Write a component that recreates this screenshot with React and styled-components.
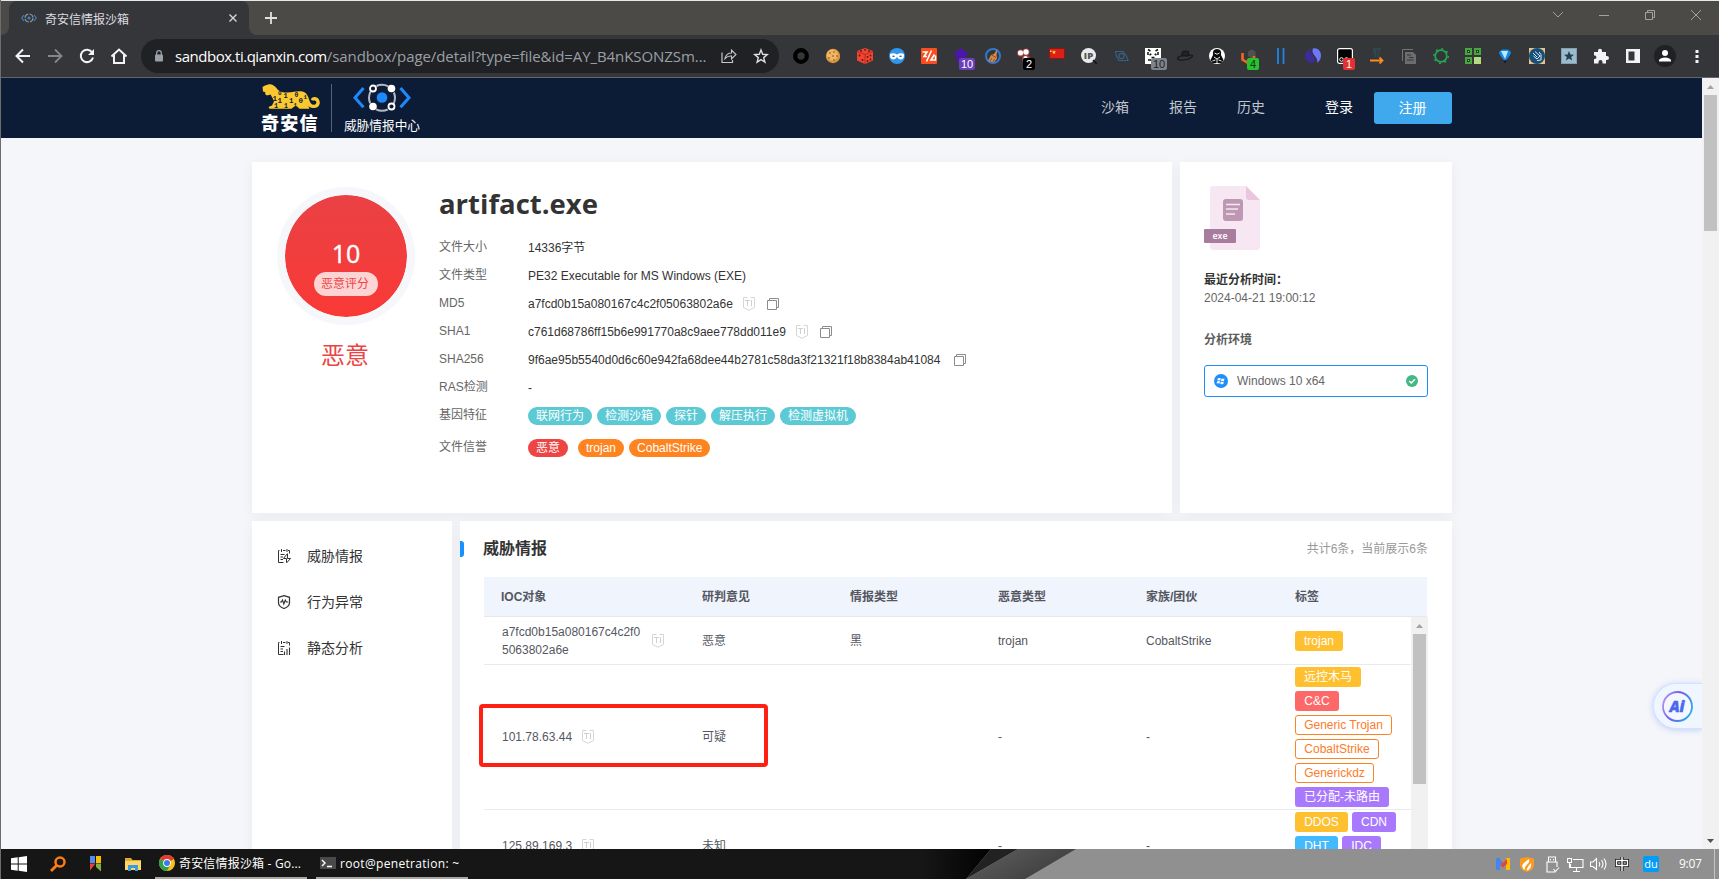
import React from "react";
import styled, { createGlobalStyle, css } from "styled-components";

const ui = `"Open Sans", "Noto Sans CJK SC", sans-serif`;
const body = `"Liberation Sans", "Noto Sans CJK SC", sans-serif`;

const Global = createGlobalStyle`
  * { box-sizing: border-box; }
  body { margin: 0; background: #f5f6fa; overflow: hidden; }
  svg { display: block; flex: none; }
`;

const Desktop = styled.div`
  width: 1719px;
  height: 879px;
  display: flex;
  flex-direction: column;
  overflow: hidden;
  border-left: 1px solid #6d6d6d;
  font-family: ${body};
  font-size: 12px;
`;

/* ---------- browser chrome ---------- */

const TabStrip = styled.div`
  height: 35px;
  flex: none;
  display: flex;
  background: #4b4a46;
  border-top: 1px solid #e4eaea;
`;
const TabEdge = styled.div`
  width: 8px;
  background: #35363a;
  &::after {
    content: "";
    display: block;
    height: 34px;
    background: #4b4a46;
    border-radius: ${(p) => (p.$right ? "0 0 0 8px" : "0 0 8px 0")};
  }
`;
const Tab = styled.div`
  width: 240px;
  display: flex;
  align-items: center;
  padding: 0 11px 0 12px;
  background: #35363a;
  border-radius: 8px 8px 0 0;
  color: #dcdde0;
  font: 12px/35px "Noto Sans CJK SC", sans-serif;
`;
const TabTitle = styled.span`
  flex: 1;
  margin-left: 8px;
`;
const NewTab = styled.div`
  display: flex;
  align-items: center;
  padding-left: 7px;
`;
const WindowButtons = styled.div`
  margin-left: auto;
  width: 184px;
  height: 28px;
  display: grid;
  grid-template-columns: repeat(4, 46px);
  place-items: center;
`;
const Toolbar = styled.div`
  height: 43px;
  flex: none;
  display: flex;
  align-items: center;
  background: #35363a;
  border-bottom: 1px solid #65666a;
`;
const NavButtons = styled.div`
  display: flex;
  width: 134px;
  padding-left: 6px;
`;
const Slot = styled.div`
  position: relative;
  width: 32px;
  height: 32px;
  display: grid;
  place-items: center;
`;
const AddressBar = styled.div`
  width: 638px;
  height: 34px;
  margin-left: 6px;
  border-radius: 17px;
  background: #202124;
  display: flex;
  align-items: center;
  padding: 0 2px 0 13px;
`;
const Url = styled.div`
  flex: 1;
  margin-left: 11px;
  color: #9aa0a6;
  font: 15px/30px ${ui};
  letter-spacing: -0.07px;
  white-space: nowrap;
  b { font-weight: 400; color: #fff; letter-spacing: -0.48px; }
`;
const Extensions = styled.div`
  display: flex;
  margin-left: 6px;
`;
const Badge = styled.span`
  position: absolute;
  left: 14px;
  top: 18px;
  min-width: 12px;
  height: 12px;
  padding: 0 2px;
  border-radius: 2px;
  background: ${(p) => p.$bg};
  color: ${(p) => p.$fg || "#fff"};
  font: 11px/12px "Liberation Sans", sans-serif;
  text-align: center;
`;

/* ---------- page ---------- */

const Viewport = styled.div`
  flex: 1;
  min-height: 0;
  display: flex;
`;
const Page = styled.div`
  position: relative;
  flex: 1;
  overflow: hidden;
  background: #f5f6fa;
`;
const Header = styled.header`
  height: 60px;
  background: #0c1c37;
`;
const Wrap = styled.div`
  width: 1200px;
  margin: 0 249px 0 251px;
`;
const HeaderInner = styled(Wrap)`
  height: 60px;
  display: flex;
  align-items: center;
`;
const Brand = styled.div`
  width: 80px;
  height: 48px;
  padding-left: 10px;
  border-right: 1px solid #55617a;
  display: flex;
  flex-direction: column;
  color: #fff;
`;
const BrandName = styled.div`
  font: 900 18px/22px "Noto Sans CJK SC", sans-serif;
  letter-spacing: 1.2px;
  margin: 2px 0 0 -1px;
`;
const Product = styled.div`
  width: 80px;
  height: 50px;
  margin-left: 10px;
  display: flex;
  flex-direction: column;
  align-items: center;
  gap: 3px;
  color: #fff;
  font: 12.7px/18px "Noto Sans CJK SC", sans-serif;
  white-space: nowrap;
`;
const Menu = styled.nav`
  margin-left: auto;
  display: flex;
  align-items: center;
  font-size: 14px;
  color: #c0c5cd;
`;
const MenuItem = styled.span`
  width: 28px;
  height: 32px;
  line-height: 30px;
  white-space: nowrap;
  margin-right: ${(p) => p.$gap}px;
  color: ${(p) => (p.$bright ? "#fff" : "inherit")};
`;
const Register = styled.button`
  width: 78px;
  height: 32px;
  padding: 0 1px 0 0;
  border: 0;
  border-radius: 3px;
  background: #40a9ee;
  color: #fff;
  font: 14px/30px ${body};
`;

const Panel = styled.section`
  background: #fff;
  box-shadow: 0 3px 12px rgba(60, 60, 40, 0.06);
`;
const Summary = styled(Wrap)`
  margin-top: 24px;
  height: 351px;
  display: grid;
  grid-template-columns: 920px 272px;
  gap: 8px;
`;
const FileCard = styled(Panel)`
  display: flex;
  padding: 25px;
`;
const ScoreColumn = styled.div`
  width: 138px;
  display: flex;
  flex-direction: column;
  align-items: center;
`;
const ScoreDisc = styled.div`
  width: 138px;
  height: 138px;
  border: 8px solid #f5f7fb;
  border-radius: 50%;
  background: linear-gradient(#ea4145, #f93936) padding-box;
  display: flex;
  flex-direction: column;
  align-items: center;
  padding-top: 40px;
`;
const Score = styled.div`
  height: 37px;
  color: #fff;
  font: 25px/36px ${ui};
  -webkit-text-stroke: 0.4px #fff;
`;
const ScoreLabel = styled.div`
  width: 64px;
  height: 24px;
  border-radius: 12px;
  background: #fdd4d4;
  color: #ee4444;
  font: 12px/24px ${body};
  text-align: center;
  padding-right: 2px;
`;
const Verdict = styled.div`
  margin-top: 12px;
  padding-right: 2px;
  color: #ee4444;
  font: 24px/34px "Noto Sans CJK SC", sans-serif;
`;
const Details = styled.div`
  margin-left: 24px;
`;
const FileName = styled.h1`
  height: 46px;
  margin: -6px 0 7px;
  color: #333;
  font: 700 27.5px/46px ${ui};
`;
const Field = styled.div`
  height: ${(p) => p.$h || 28}px;
  display: flex;
  align-items: center;
`;
const FieldLabel = styled.span`
  width: 89px;
  padding-bottom: 2px;
  color: #666;
  line-height: 18px;
`;
const FieldValue = styled.span`
  display: flex;
  align-items: center;
  color: #333;
  line-height: 18px;
  white-space: nowrap;
`;
const IconGap = styled.span`
  margin-left: ${(p) => p.$w}px;
`;
const Pill = styled.span`
  height: 18px;
  padding: 0 8px;
  margin-right: ${(p) => p.$gap || 5}px;
  border-radius: 9px;
  background: ${(p) => p.$bg};
  color: #fff;
  line-height: 18px;
`;

const EnvCard = styled(Panel)`
  padding: 24px;
  display: flex;
  flex-direction: column;
`;
const Caption = styled.div`
  margin-top: ${(p) => p.$mt}px;
  font-weight: 700;
  line-height: 18px;
  color: ${(p) => p.$color};
`;
const When = styled.div`
  line-height: 18px;
  color: #666;
`;
const EnvOption = styled.div`
  margin-top: 16px;
  height: 32px;
  display: flex;
  align-items: center;
  padding: 0 9px;
  border: 1px solid #1e8efb;
  border-radius: 3px;
  color: #666;
  line-height: 18px;
`;
const EnvName = styled.span`
  flex: 1;
  margin-left: 9px;
`;

const Lower = styled(Wrap)`
  margin-top: 8px;
  height: 400px;
  display: grid;
  grid-template-columns: 200px 992px;
  gap: 8px;
`;
const SideNav = styled(Panel)`
  padding: 12px 25px;
`;
const SideItem = styled.div`
  height: 46px;
  display: flex;
  align-items: center;
  gap: 16px;
  color: #333;
  font-size: 14px;
  line-height: 20px;
`;
const Intel = styled(Panel)`
  padding: 17px 24px 0 0;
`;
const IntelHead = styled.div`
  height: 39px;
  display: flex;
  align-items: flex-start;
  justify-content: space-between;
`;
const IntelTitle = styled.h2`
  margin: 0;
  display: flex;
  align-items: center;
  gap: 19px;
  color: #333;
  font: 700 16px/22px ${body};
  &::before {
    content: "";
    width: 4px;
    height: 16px;
    border-radius: 0 3px 3px 0;
    background: #1890ff;
  }
`;
const Count = styled.span`
  margin: 1px 0 0 0;
  color: #999;
  line-height: 20px;
`;
const Table = styled.div`
  margin-left: 24px;
`;
const gridCols = css`
  display: grid;
  grid-template-columns: 202px 148px 148px 148px 149px 1fr;
  align-items: center;
`;
const HeadRow = styled.div`
  ${gridCols}
  width: 943px;
  height: 40px;
  background: #f0f4fc;
  border-bottom: 1px solid #e6e8ec;
  color: #4a4d55;
  font-weight: 700;
`;
const BodyArea = styled.div`
  display: flex;
  height: 300px;
`;
const Rows = styled.div`
  width: 927px;
`;
const Row = styled.div`
  ${gridCols}
  height: ${(p) => p.$h}px;
  border-bottom: 1px solid #e8eaec;
`;
const Cell = styled.div`
  padding-left: ${(p) => (p.$first ? 17 : 16)}px;
  color: #545761;
  line-height: 18px;
`;
const Ioc = styled(Cell)`
  display: flex;
  align-items: center;
  padding-left: 18px;
  gap: ${(p) => p.$gap}px;
`;
const Tags = styled.div`
  padding: 0 8px 0 16px;
  display: flex;
  flex-wrap: wrap;
  gap: 4px;
`;
const tones = {
  yellow: "#fec02f",
  red: "#fd6869",
  purple: "#a979fd",
  blue: "#42bafd",
};
const Tag = styled.span`
  width: ${(p) => p.$w}px;
  height: 20px;
  border-radius: 3px;
  text-align: center;
  white-space: nowrap;
  line-height: 21px;
  color: #fff;
  background: ${(p) => tones[p.$tone]};
  ${(p) =>
    p.$tone === "outline" &&
    css`
      line-height: 19px;
      color: #fd7c28;
      background: #fff;
      border: 1px solid #fd8420;
    `}
`;

const Track = styled.div`
  width: 17px;
  flex: none;
  display: flex;
  flex-direction: column;
  align-items: center;
  background: #f1f1f1;
`;
const Thumb = styled.div`
  width: 13px;
  height: ${(p) => p.$h}px;
  background: #c1c1c1;
`;
const TrackArrow = styled.div`
  height: 17px;
  display: grid;
  place-items: center;
  ${(p) => p.$end && "margin-top: auto;"}
`;

const Highlight = styled.div`
  position: absolute;
  left: 478px;
  top: 626px;
  width: 289px;
  height: 63px;
  border: 4px solid #fe2012;
  border-radius: 4px;
`;
const Assistant = styled.div`
  position: absolute;
  right: 0;
  top: 605px;
  width: 49px;
  height: 46px;
  padding: 7px 0 0 8px;
  border: 1px solid #d3e3fd;
  border-right: 0;
  border-radius: 23px 0 0 23px;
  background: #f0f6ff;
  box-shadow: 0 1px 6px rgba(80, 110, 250, 0.3);
`;

/* ---------- taskbar ---------- */

const Taskbar = styled.footer`
  position: relative;
  height: 30px;
  flex: none;
  display: flex;
  align-items: center;
  background: #909090;
  color: #fff;
`;
const Backdrop = styled.svg`
  position: absolute;
  left: 0;
  top: 0;
`;
const Shortcuts = styled.div`
  position: relative;
  display: flex;
  align-items: center;
  width: 154px;
  padding-left: 10px;
  gap: 23px;
`;
const Task = styled.div`
  position: relative;
  width: 152px;
  height: 30px;
  margin-right: 9px;
  padding-left: 4px;
  display: flex;
  align-items: center;
  gap: 4px;
  border-bottom: 2px solid #a9a8a4;
  font: 12px/28px ${ui};
  letter-spacing: ${(p) => p.$ls}px;
  white-space: nowrap;
`;
const TaskText = styled.span`
  padding-top: 2px;
`;
const Tray = styled.div`
  position: relative;
  margin-left: auto;
  width: 223px;
  height: 30px;
  display: flex;
  align-items: center;
`;
const TrayItem = styled.div`
  width: ${(p) => p.$w}px;
  display: flex;
`;
const ImeBadge = styled.div`
  width: 16px;
  height: 16px;
  border-radius: 2px;
  background: #009cf5;
  font: 11px/15px ${ui};
  text-align: center;
`;
const Clock = styled.div`
  font: 12px/28px ${ui};
  letter-spacing: -0.3px;
  width: 35px;
`;
const DesktopEdge = styled.div`
  width: 1px;
  height: 30px;
  background: #c4c4c4;
`;

/* ---------- drawings ---------- */

const S = ({ w = 16, h = w, vb, children }) => (
  <svg width={w} height={h} viewBox={vb || `0 0 ${w} ${h}`} fill="none">
    {children}
  </svg>
);

const Favicon = () => (
  <S>
    <path d="M3 5 .7 8 3 11M13 5l2.300 3L13 11" stroke="#3b82c4" strokeWidth="1.200" />
    <circle cx="8" cy="8" r="4" stroke="#8d9298" strokeWidth="1.200" strokeDasharray="5 1.280" />
    <circle cx="8" cy="8" r="1.600" fill="#3b82c4" />
  </S>
);

const Tiger = () => (
  <S w={58} h={25}>
    <path
      d="M.5 3 3 1.500 7 .2c3-.3 5 1 7 3.200 1.500 2 3 3.600 6 4.600 4 1 8 .6 12-.2 4-.8 8-.8 10.500.4 2.500 1.500 3.500 4 4.500 7 1.300 4.500 3.500 6.300 6 5.300 2-1 1.800-3.400-.3-4-1.500-.3-2.700.7-3.500-.7-.4-1.700 1.500-2.900 3.500-2.700 3.500.3 5.500 3.300 5 6.400-.5 3.300-3.500 5-7 4.500-2-.4-3.500-1-4.500-2l1.300 2.800H37.500L35 22.500l-3 .3L29.500 24.800H7.500L6.500 23l3.500-1.500 2-4-1.500-3.500-2-3.500L5 11.500l-2-1.500.5-1.800L1 7.500z"
      fill="#fbc92f"
    />
    <g fill="#0c1c37" fontFamily="Liberation Mono" fontWeight="700" fontSize="7.500">
      <text x="10.500" y="16.500">1</text>
      <text x="16" y="11" fontSize="6">0</text>
      <text x="15.500" y="18.500">1</text>
      <text x="21.500" y="14" fontSize="7">1</text>
      <text x="12" y="23.500" fontSize="7">1</text>
      <text x="22" y="23.500" fontSize="6.500">1</text>
      <text x="27" y="19">1</text>
      <text x="32.500" y="13" fontSize="6.500">0</text>
      <text x="31.500" y="22.500" fontSize="6">1</text>
      <text x="36.500" y="18.500">0</text>
      <text x="41.500" y="14.500" fontSize="6">1</text>
    </g>
  </S>
);

const Orbit = () => (
  <S w={58} h={30}>
    <path d="M10.500 5 2 14.800l8.500 9.500M47.500 5 56 14.800l-8.500 9.500" stroke="#1d89fb" strokeWidth="3" />
    <circle cx="29" cy="14.800" r="13" stroke="#b3b9c6" strokeWidth="2" strokeDasharray="12 8.420" strokeDashoffset="6" />
    <circle cx="29" cy="14.500" r="5.300" fill="#1d89fb" />
    <circle cx="38.500" cy="5.500" r="3.800" fill="#fff" />
    <circle cx="20" cy="23.500" r="3.800" fill="#fff" />
    <circle cx="20" cy="5.500" r="3" stroke="#fff" strokeWidth="1.800" fill="#0c1c37" />
    <circle cx="38.500" cy="23.500" r="3" stroke="#fff" strokeWidth="1.800" fill="#0c1c37" />
  </S>
);

const Shield = () => (
  <S w={12} h={14}>
    <path d="M4.500.5h-4v10L6 13.300l5.500-2.800V.5h-4" stroke="#d6d6d6" />
    <path d="M2 3.500h5M4.500 3.500v5.500M8.500 3v6" stroke="#d0d0d0" />
  </S>
);
const Copy = () => (
  <S w={12}>
    <path d="M.5 2.500h9v9h-9zM2.500 2.500v-2h9v9h-2" stroke="#8c8c8c" />
  </S>
);

const FileArt = () => (
  <S w={56} h={64}>
    <path d="M9 0h33l14 14v47a3 3 0 0 1-3 3H9a3 3 0 0 1-3-3V3a3 3 0 0 1 3-3z" fill="#f6e7f2" />
    <path d="M42 0l14 14H45a3 3 0 0 1-3-3z" fill="#e9c5df" />
    <rect x="19" y="13" width="20" height="22" rx="3" fill="#be97b3" />
    <path d="M22 18.500h14M22 23h12M22 28h9" stroke="#f6e7f2" strokeWidth="1.400" />
    <rect y="43" width="32" height="14" rx="1" fill="#a77c9c" />
    <text x="16" y="53" fill="#fff" fontSize="8.800" fontWeight="600" fontFamily="Open Sans" textAnchor="middle">exe</text>
  </S>
);
const WinDot = () => (
  <S w={14}>
    <circle cx="7" cy="7" r="7" fill="#1e8efb" />
    <path d="M3.800 4.300q1.500-.8 3 0l-.5 2.300q-1.500-.7-3 0zM7.500 4.500q1.500.6 3-.1L10 6.700q-1.500.7-3 .1zM3.100 7.400q1.500-.7 3 0l-.5 2.200q-1.500-.7-3 0zM6.800 7.600q1.500.7 3 0L9.300 9.900q-1.500.7-3 0z" fill="#fff" />
  </S>
);
const Check = () => (
  <S w={12}>
    <circle cx="6" cy="6" r="6" fill="#42b983" />
    <path d="M3.200 6 5.300 8l3.600-3.700" stroke="#fff" strokeWidth="1.500" />
  </S>
);

const ListIcon = ({ kind }) => (
  <S w={14}>
    {kind === "behavior" ? (
      <>
        <path d="M7 .7 12.500 2.300v5.200c0 3-2.500 4.900-5.500 6-3-1.100-5.500-3-5.500-6V2.300z" stroke="#333" strokeWidth="1.200" />
        <path d="M3 7h1.500l1-2 1.300 4L8.300 5l1 2h1.900" stroke="#333" strokeWidth="1.100" />
      </>
    ) : (
      <>
        <path d="M2.500 1.500h-1v12h5M6 1.500h2.500M11 1.500h1.500v3M4.500 0v3M10 0v3M3.500 5.500h4M3.500 8h2.500M3.500 10.500h2.500" stroke="#333" />
        {kind === "intel" ? (
          <path d="M10.500 4.500 6.500 9.500h3V13.500M10.500 5v4.500h3L9.500 14" stroke="#333" />
        ) : (
          <path d="M7.500 10.500v3.500M10 8v6M12.500 6.500V14" stroke="#333" strokeWidth="1.100" />
        )}
      </>
    )}
  </S>
);

const AiMark = () => (
  <S w={31}>
    <defs>
      <linearGradient id="ring" x1="0" y1=".2" x2="1" y2=".6">
        <stop offset="0" stopColor="#b694f0" />
        <stop offset=".45" stopColor="#6c5df0" />
        <stop offset="1" stopColor="#2fa8e8" />
      </linearGradient>
    </defs>
    <circle cx="15.500" cy="15.500" r="14.500" stroke="url(#ring)" strokeWidth="1.800" fill="#f4f7ff" />
    <text x="15" y="21" textAnchor="middle" fontFamily="Open Sans" fontWeight="800" fontStyle="italic" fontSize="15" fill="#4a68ee" stroke="#4a68ee" strokeWidth=".4">Ai</text>
  </S>
);

const Arrow = ({ down, dark }) => (
  <S w={7} h={4}>
    <path d={down ? "M0 0h7L3.500 4z" : "M0 4h7L3.500 0z"} fill={dark ? "#505050" : "#a3a3a3"} />
  </S>
);

const extensions = [
  { art: <circle cx="8" cy="8" r="5.800" stroke="#000" strokeWidth="4.300" /> },
  {
    art: (
      <>
        <circle cx="8" cy="8" r="7.200" fill="#dd963b" />
        <circle cx="7.300" cy="7" r="5.500" fill="#eeb765" />
        <g fill="#7a4a18"><circle cx="5" cy="5" r=".8" /><circle cx="9" cy="4" r=".8" /><circle cx="8" cy="8" r=".8" /><circle cx="12" cy="8" r=".8" /><circle cx="4" cy="10" r=".8" /><circle cx="9" cy="12" r=".8" /></g>
      </>
    ),
  },
  {
    art: (
      <>
        <path d="m8 0 8 3v9.500L8 16l-8-3.500V3z" fill="#f4432f" />
        <path d="m0 3.500 8 3 8-3M8 6.500V16" stroke="#a82a20" strokeWidth=".8" />
        <g fill="#43201d"><circle cx="4" cy="3" r=".9" /><circle cx="8" cy="1.800" r=".9" /><circle cx="12" cy="3" r=".9" /><circle cx="2.500" cy="7.500" r=".9" /><circle cx="5.500" cy="12" r=".9" /><circle cx="10.500" cy="9" r=".9" /><circle cx="13.500" cy="7.500" r=".9" /><circle cx="10.500" cy="13" r=".9" /><circle cx="13.500" cy="11.500" r=".9" /></g>
      </>
    ),
  },
  {
    art: (
      <>
        <circle cx="8" cy="8" r="8" fill="#2f96ee" />
        <path d="M1 6q3.500-1.500 7 .5Q11.500 4.500 15 6q.5 5-3 5.500-2.500 0-4-2.500-1.500 2.500-4 2.500Q.5 11 1 6z" fill="#fff" />
        <path d="M3 8.300q1.500-1.600 3 0-1.500 1.500-3 0zm7 0q1.500-1.600 3 0-1.500 1.500-3 0z" fill="#1c5fa8" />
      </>
    ),
  },
  {
    art: (
      <>
        <rect width="16" height="16" rx="1" fill="#fb4d1d" />
        <path d="M1.500 4H6L3 8.500h3M10.500 2.500l-5 11M13.500 6.500 10 12H14.500V7.500" stroke="#fff" strokeWidth="1.600" />
      </>
    ),
  },
  { art: <path d="m8 0 8 6-3.500 1.500V13L8 16l-4.500-3V8L0 6z" fill="#4b17a8" />, badge: "10", bg: "#6a3fb8" },
  {
    art: (
      <>
        <circle cx="8" cy="8" r="7" stroke="#2f78d0" strokeWidth="2" />
        <path d="m12.500 1-3.500 5-3 1-3 6 6 1.500 3-4-.5-3.500z" fill="#d58b4c" />
        <path d="m6.500 7 4.500 2.500M5 13l2-3M8 14l1.500-3" stroke="#8a4c20" />
      </>
    ),
  },
  {
    art: (
      <>
        <g fill="#b34040"><circle cx="3.500" cy="5" r="3.500" /><circle cx="9" cy="4" r="3.500" /><circle cx="9" cy="11" r="4" /></g>
        <g fill="#fff"><circle cx="3.500" cy="4.800" r="2.600" /><circle cx="9" cy="4" r="2.700" /><circle cx="8.500" cy="10" r="2" /></g>
      </>
    ),
    badge: "2",
    bg: "#000",
  },
  {
    art: (
      <>
        <path d="M.5.5h15v10H.5z" fill="#dc2018" stroke="#8f1612" />
        <path d="m5 2 .6 1.400 1.500.1-1.200 1 .4 1.500L5 5.200l-1.300.8.4-1.500-1.200-1 1.500-.1zM1 2.500h1.500v1.500H1z" fill="#ffde3a" />
      </>
    ),
  },
  {
    art: (
      <>
        <circle cx="7.500" cy="7.500" r="7.500" fill="#e8eaec" />
        <path d="m12 12 4 4" stroke="#111" strokeWidth="1.500" />
        <text x="7.500" y="11" textAnchor="middle" fontFamily="Open Sans" fontWeight="800" fontSize="9.500" fill="#555">IP</text>
      </>
    ),
  },
  {
    art: (
      <>
        <path d="M2.500 3.500H10L13.500 8l1.500 4.500H6L3.500 8z" stroke="#34638a" strokeWidth="1.100" />
        <circle cx="8.500" cy="8" r="2.600" stroke="#34638a" strokeWidth="1.100" />
      </>
    ),
  },
  {
    art: (
      <>
        <path d="M0 0h16v16H0z" fill="#fff" />
        <path d="M3 1.500 5.500 3M13 1.500 10.500 3M4.500 7l1.800-1M11.500 7l-1.800-1M6.500 9.500h3M3 4v3M13 4v3M3 12h3" stroke="#111" strokeWidth="1.500" />
      </>
    ),
    badge: "10",
    bg: "#7e848c",
    fg: "#222",
  },
  {
    art: (
      <>
        <path d="M4.500 8 5.500 3.500q3-1 6 0L12 8z" fill="#222" stroke="#151515" />
        <path d="M4 8C-2 10 0 12.500 6 12c6-.4 10-3 9.500-4.500Q15 6.500 12 7.500" stroke="#161616" strokeWidth="1.200" />
      </>
    ),
  },
  {
    art: (
      <>
        <circle cx="8" cy="8" r="8" fill="#fff" />
        <path d="M4 7Q3 1 8 1t4 6l2.500 5-2 3h-9l-2-3z" fill="#0a0a0a" />
        <path d="M5.500 5q2.500 2.500 5 0M5 9l3 2 3-2M3.500 13l3-1M12.500 13l-3-1M8 11v4" stroke="#fff" strokeWidth=".9" />
      </>
    ),
  },
  {
    art: (
      <>
        <path d="M7 3.500 11 1.500l3.500 2v5.500L11 11 7 8z" fill="#505050" />
        <path d="M1.500 5v6.500L7 15v-3M13 10v-2" stroke="#f4661f" strokeWidth="2.600" />
      </>
    ),
    badge: "4",
    bg: "#28c22f",
    fg: "#143815",
  },
  { art: <path d="M5 0v16M10.500 0v16" stroke="#1f86e8" strokeWidth="1.800" /> },
  {
    art: (
      <>
        <path d="M6 1C0 2-2 9 2 13c2 2 5 2 7 1 2-2 .5-5-1.500-7S5 3 6 1z" fill="#3b2c9c" />
        <path d="M8 .5c5-1 8 3 8 7 0 3-1.500 6-4 7.500 1-3-.5-5-2.500-7.500S7 3 8 .5z" fill="#6c78f8" />
      </>
    ),
  },
  {
    art: (
      <>
        <rect x=".6" y=".6" width="14.800" height="14.800" rx="2" fill="#000" stroke="#fff" strokeWidth="1.200" />
        <circle cx="4.500" cy="11.500" r="1.800" stroke="#fff" /><circle cx="9.500" cy="11.500" r="1.800" stroke="#fff" />
      </>
    ),
    badge: "1",
    bg: "#e53030",
  },
  {
    art: (
      <>
        <path d="M4 1h8M6.500 1v8M9.500 1v8M5 1v4" stroke="#31474e" strokeWidth="1.800" />
        <path d="M1 12.500h12M10.500 9.500l3 3-3 3" stroke="#fb8a1e" strokeWidth="1.800" />
      </>
    ),
  },
  {
    art: (
      <>
        <path d="M1.500 13V1.500H12" stroke="#747474" />
        <path d="M4 4h8l3 3v9H4z" fill="#6d6d6d" />
        <path d="M6 7h4M8 9.500h4.500M6 12h6.500" stroke="#35363a" strokeWidth="1.200" />
      </>
    ),
  },
  {
    art: (
      <>
        <circle cx="8" cy="8" r="5.800" stroke="#24a552" strokeWidth="1.700" />
        <circle cx="8" cy="8" r="7.200" stroke="#24a552" strokeWidth="1.500" strokeDasharray="2 3.655" />
      </>
    ),
  },
  {
    art: (
      <>
        <path d="M1 1h5v5H1zM10 1h5v5h-5zM1 10h5v5H1z" stroke="#44a83c" strokeWidth="2" />
        <path d="M9 9h7v7H9z" fill="#b3dc82" />
        <path d="M3 3h1v1H3zM12 3h1v1h-1zM3 12h1v1H3z" fill="#8bcf56" />
      </>
    ),
  },
  {
    art: (
      <>
        <path d="M2 4 5 1.500h6L14 4q0 3-6 9.500Q2 7 2 4z" fill="#1388e8" />
        <path d="M4 3h7L10 6 8 11 5.500 6z" fill="#bfe9ff" />
        <path d="m6.500 12.500 1.500 3 1.500-3z" fill="#111" />
      </>
    ),
  },
  {
    art: (
      <>
        <path d="M0 0h16v16H0z" fill="#e8c48d" />
        <circle cx="8" cy="8" r="8" fill="#174f78" />
        <path d="m4 5 4 4M6 3.500l5 4.500-3 3-3.500-3M10 4l2 2.500V12l-4 .5" stroke="#d9e8ee" />
      </>
    ),
  },
  {
    art: (
      <>
        <path d="M0 0h16v16H0z" fill="#7ea1b6" />
        <path d="M1 1h14v14H1z" fill="#9dbccb" />
        <path d="m8 3 1.400 3.400 3.600.3-2.800 2.300.9 3.500L8 10.600l-3.100 1.900.9-3.500L3 6.700l3.600-.3z" fill="#253e50" />
      </>
    ),
  },
  {
    art: <path d="M1 4h4V2.700a2 2 0 0 1 4 0V4h4v4h1a2 2 0 0 1 0 4h-1v3.500H9.500V14a2 2 0 0 0-4 0v1.500H1V11h1a1.800 1.800 0 0 0 0-3.500H1z" fill="#f1f3f4" />,
  },
  {
    art: (
      <>
        <path d="M1 1h14v14H1z" fill="#f1f3f4" />
        <path d="M3.500 3.500h6v9h-6z" fill="#35363a" />
      </>
    ),
  },
];

const Chevron = () => <S w={12} h={16}><path d="m1 5 5 5 5-5" stroke="#a3a29f" /></S>;

export default function App() {
  return (
    <Desktop>
      <Global />
      <TabStrip>
        <TabEdge />
        <Tab>
          <Favicon />
          <TabTitle>奇安信情报沙箱</TabTitle>
          <S w={10}><path d="m1.500 1.500 7 7M8.500 1.500l-7 7" stroke="#d6d7da" strokeWidth="1.400" /></S>
        </Tab>
        <TabEdge $right />
        <NewTab><S w={14}><path d="M7 1v12M1 7h12" stroke="#e1e1e0" strokeWidth="1.800" /></S></NewTab>
        <WindowButtons>
          <Chevron />
          <S w={10}><path d="M0 5.500h10" stroke="#a3a29f" /></S>
          <S w={10}><path d="M.5 2.500h7v7h-7zM2.500 2.500v-2h7v7h-2" stroke="#a3a29f" /></S>
          <S w={10}><path d="m0 0 10 10M10 0 0 10" stroke="#a3a29f" /></S>
        </WindowButtons>
      </TabStrip>

      <Toolbar>
        <NavButtons>
          <Slot><S><path d="M15 8H2M8 1.500 1.500 8 8 14.500" stroke="#f1f3f4" strokeWidth="2" /></S></Slot>
          <Slot><S><path d="M1 8h13M8 1.500 14.500 8 8 14.500" stroke="#85868a" strokeWidth="1.800" /></S></Slot>
          <Slot>
            <S>
              <path d="M13.200 4.500A6.200 6.200 0 1 0 14 9.500" stroke="#f1f3f4" strokeWidth="2" />
              <path d="M15 1v6H9z" fill="#f1f3f4" />
            </S>
          </Slot>
          <Slot><S><path d="M.5 8.500 8 1.500l7.500 7M3 7v8h10V7" stroke="#f1f3f4" strokeWidth="2" /></S></Slot>
        </NavButtons>
        <AddressBar>
          <S w={10} h={12}>
            <rect x="1" y="4.500" width="8" height="7" rx="1" fill="#9aa0a6" />
            <path d="M2.700 5V3a2.300 2.300 0 0 1 4.600 0v2" stroke="#9aa0a6" strokeWidth="1.300" />
          </S>
          <Url><b>sandbox.ti.qianxin.com</b>/sandbox/page/detail?type=file&amp;id=AY_B4nKSONZSm...</Url>
          <Slot>
            <S>
              <path d="M1 4.500v10h10.500V12" stroke="#c4c7cb" strokeWidth="1.200" />
              <path d="M4 10.500C5 6.500 7.500 5 10.500 5V2L15 6.500 10.500 11V8Q7 7.500 4 10.500z" stroke="#c4c7cb" strokeWidth="1.100" />
            </S>
          </Slot>
          <Slot>
            <S><path d="m8 2 1.700 4.300 4.600.3-3.600 3 1.200 4.500L8 11.600l-3.900 2.500 1.200-4.500-3.600-3 4.600-.3z" stroke="#dcdee1" strokeWidth="1.400" /></S>
          </Slot>
        </AddressBar>
        <Extensions>
          {extensions.map((e, i) => (
            <Slot key={i}>
              <S>{e.art}</S>
              {e.badge && <Badge $bg={e.bg} $fg={e.fg}>{e.badge}</Badge>}
            </Slot>
          ))}
          <Slot>
            <S w={22}>
              <circle cx="11" cy="11" r="11" fill="#202124" />
              <circle cx="11" cy="8" r="3" fill="#fff" />
              <path d="M5 16.500v-1.500q1.500-2.500 6-2.500t6 2.500v1.500z" fill="#fff" />
            </S>
          </Slot>
          <Slot><S><path d="M6.500 2h3v3h-3zM6.500 7h3v3h-3zM6.500 12h3v3h-3z" fill="#f1f3f4" /></S></Slot>
        </Extensions>
      </Toolbar>

      <Viewport>
        <Page>
          <Header>
            <HeaderInner>
              <Brand>
                <Tiger />
                <BrandName>奇安信</BrandName>
              </Brand>
              <Product>
                <Orbit />
                <span>威胁情报中心</span>
              </Product>
              <Menu>
                <MenuItem $gap={40}>沙箱</MenuItem>
                <MenuItem $gap={40}>报告</MenuItem>
                <MenuItem $gap={60}>历史</MenuItem>
                <MenuItem $gap={21} $bright>登录</MenuItem>
                <Register>注册</Register>
              </Menu>
            </HeaderInner>
          </Header>

          <Summary>
            <FileCard>
              <ScoreColumn>
                <ScoreDisc>
                  <Score>10</Score>
                  <ScoreLabel>恶意评分</ScoreLabel>
                </ScoreDisc>
                <Verdict>恶意</Verdict>
              </ScoreColumn>
              <Details>
                <FileName>artifact.exe</FileName>
                <Field><FieldLabel>文件大小</FieldLabel><FieldValue>14336字节</FieldValue></Field>
                <Field><FieldLabel>文件类型</FieldLabel><FieldValue>PE32 Executable for MS Windows (EXE)</FieldValue></Field>
                <Field>
                  <FieldLabel>MD5</FieldLabel>
                  <FieldValue>a7fcd0b15a080167c4c2f05063802a6e<IconGap $w={10}><Shield /></IconGap><IconGap $w={12}><Copy /></IconGap></FieldValue>
                </Field>
                <Field>
                  <FieldLabel>SHA1</FieldLabel>
                  <FieldValue>c761d68786ff15b6e991770a8c9aee778dd011e9<IconGap $w={10}><Shield /></IconGap><IconGap $w={12}><Copy /></IconGap></FieldValue>
                </Field>
                <Field>
                  <FieldLabel>SHA256</FieldLabel>
                  <FieldValue>9f6ae95b5540d0d6c60e942fa68dee44b2781c58da3f21321f18b8384ab41084<IconGap $w={14}><Copy /></IconGap></FieldValue>
                </Field>
                <Field><FieldLabel>RAS检测</FieldLabel><FieldValue>-</FieldValue></Field>
                <Field>
                  <FieldLabel>基因特征</FieldLabel>
                  <FieldValue>
                    {["联网行为", "检测沙箱", "探针", "解压执行", "检测虚拟机"].map((t) => (
                      <Pill key={t} $bg="#5bcad5">{t}</Pill>
                    ))}
                  </FieldValue>
                </Field>
                <Field $h={36}>
                  <FieldLabel>文件信誉</FieldLabel>
                  <FieldValue>
                    <Pill $bg="#ee4444" $gap={10}>恶意</Pill>
                    <Pill $bg="#ff831e">trojan</Pill>
                    <Pill $bg="#ff831e">CobaltStrike</Pill>
                  </FieldValue>
                </Field>
              </Details>
            </FileCard>
            <EnvCard>
              <FileArt />
              <Caption $mt={21} $color="#333">最近分析时间：</Caption>
              <When>2024-04-21 19:00:12</When>
              <Caption $mt={24} $color="#5c5c5c">分析环境</Caption>
              <EnvOption>
                <WinDot />
                <EnvName>Windows 10 x64</EnvName>
                <Check />
              </EnvOption>
            </EnvCard>
          </Summary>

          <Lower>
            <SideNav>
              <SideItem><ListIcon kind="intel" />威胁情报</SideItem>
              <SideItem><ListIcon kind="behavior" />行为异常</SideItem>
              <SideItem><ListIcon kind="static" />静态分析</SideItem>
            </SideNav>
            <Intel>
              <IntelHead>
                <IntelTitle>威胁情报</IntelTitle>
                <Count>共计6条，当前展示6条</Count>
              </IntelHead>
              <Table>
                <HeadRow>
                  <Cell $first>IOC对象</Cell>
                  <Cell>研判意见</Cell>
                  <Cell>情报类型</Cell>
                  <Cell>恶意类型</Cell>
                  <Cell>家族/团伙</Cell>
                  <Cell>标签</Cell>
                </HeadRow>
                <BodyArea>
                  <Rows>
                    <Row $h={48}>
                      <Ioc $gap={12}><span>a7fcd0b15a080167c4c2f0<br />5063802a6e</span><Shield /></Ioc>
                      <Cell>恶意</Cell>
                      <Cell>黑</Cell>
                      <Cell>trojan</Cell>
                      <Cell>CobaltStrike</Cell>
                      <Tags><Tag $tone="yellow" $w={48}>trojan</Tag></Tags>
                    </Row>
                    <Row $h={145}>
                      <Ioc $gap={10}><span>101.78.63.44</span><Shield /></Ioc>
                      <Cell>可疑</Cell>
                      <Cell />
                      <Cell>-</Cell>
                      <Cell>-</Cell>
                      <Tags>
                        <Tag $tone="yellow" $w={66}>远控木马</Tag>
                        <Tag $tone="red" $w={44}>C&amp;C</Tag>
                        <Tag $tone="outline" $w={97}>Generic Trojan</Tag>
                        <Tag $tone="outline" $w={84}>CobaltStrike</Tag>
                        <Tag $tone="outline" $w={79}>Generickdz</Tag>
                        <Tag $tone="purple" $w={94}>已分配-未路由</Tag>
                      </Tags>
                    </Row>
                    <Row $h={73}>
                      <Ioc $gap={10}><span>125.89.169.3</span><Shield /></Ioc>
                      <Cell>未知</Cell>
                      <Cell />
                      <Cell>-</Cell>
                      <Cell>-</Cell>
                      <Tags>
                        <Tag $tone="yellow" $w={53}>DDOS</Tag>
                        <Tag $tone="purple" $w={44}>CDN</Tag>
                        <Tag $tone="blue" $w={43}>DHT</Tag>
                        <Tag $tone="purple" $w={39}>IDC</Tag>
                        <Tag $w={90} />
                      </Tags>
                    </Row>
                  </Rows>
                  <Track>
                    <TrackArrow><Arrow /></TrackArrow>
                    <Thumb $h={150} />
                  </Track>
                </BodyArea>
              </Table>
            </Intel>
          </Lower>
          <Highlight />
          <Assistant><AiMark /></Assistant>
        </Page>
        <Track>
          <TrackArrow><Arrow /></TrackArrow>
          <Thumb $h={136} />
          <TrackArrow $end><Arrow down dark /></TrackArrow>
        </Track>
      </Viewport>

      <Taskbar>
        <Backdrop width="1090" height="30" viewBox="0 0 1090 30">
          <defs>
            <linearGradient id="base" x1="0" x2="1" y1="0" y2="0">
              <stop offset=".93" stopColor="#161616" />
              <stop offset="1" stopColor="#020202" />
            </linearGradient>
            <linearGradient id="fold" x1="0" x2="1" y1="0" y2=".5">
              <stop offset=".3" stopColor="#575757" />
              <stop offset=".8" stopColor="#454545" />
              <stop offset="1" stopColor="#353535" />
            </linearGradient>
          </defs>
          <path d="M0 0h990l-25 30H0z" fill="url(#base)" />
          <path d="M990 0h27L965 30z" fill="#222" />
          <path d="M1017 0h58l-51 30h-59z" fill="url(#fold)" />
        </Backdrop>
        <Shortcuts>
          <S><path d="m0 2.300 6.700-1v6.300H0zM7.700 1.200 16 0v7.600H7.700zM0 8.500h6.700v6.300L0 13.800zM7.700 8.500H16V16l-8.300-1.200z" fill="#fff" /></S>
          <S>
            <circle cx="10" cy="6" r="4.500" stroke="#fd7d12" strokeWidth="2.500" />
            <path d="m7 9-6 6" stroke="#fd7d12" strokeWidth="2.800" />
          </S>
          <S w={13} h={16}>
            <path d="M1 0h5v7H1z" fill="#4f8df5" /><path d="M7 0h5v7H7z" fill="#fbbc05" />
            <path d="M1 7.500h5.500L1 14.500z" fill="#ea4335" /><path d="M7 7.500h5v8L7 11z" fill="#7cb342" />
          </S>
          <S>
            <path d="M0 2h6l1.500 2H16v10H0z" fill="#e6a72b" />
            <path d="M0 5h16v9H0z" fill="#fbd86c" />
            <path d="M3 15V9h10v6h-3v-3H6v3z" fill="#3f99dd" />
          </S>
        </Shortcuts>
        <Task $ls={0.18}>
          <S>
            <circle cx="8" cy="8" r="8" fill="#fbc116" />
            <path d="M8 8 1.070 4A8 8 0 0 1 14.930 4z" fill="#e33b2e" />
            <path d="M8 8 1.070 4A8 8 0 0 0 8 16l3.400-6z" fill="#2fa04e" />
            <circle cx="8" cy="8" r="3.900" fill="#fff" /><circle cx="8" cy="8" r="3" fill="#3e7be8" />
          </S>
          <TaskText>奇安信情报沙箱 - Go...</TaskText>
        </Task>
        <Task $ls={0.32}>
          <S w={16} h={12}>
            <path d="M0 0h16v12H0z" fill="#4a4a4a" />
            <path d="m2 3 3 3-3 3M7 9.500h5" stroke="#fff" strokeWidth="1.400" />
          </S>
          <TaskText>root@penetration: ~</TaskText>
        </Task>
        <Tray>
          <TrayItem $w={24}>
            <S w={14}>
              <path d="M0 1h4v12H0z" fill="#4285f4" /><path d="M10 1h4v12h-4z" fill="#fbbc04" />
              <path d="M3 2.500 7 6l4-4v5L7 10.500 3 7z" fill="#ea4335" /><path d="M0 1h3l2.500 3v4.500L3.500 7H4v6H0z" fill="#4285f4" />
            </S>
          </TrayItem>
          <TrayItem $w={26}>
            <S w={14} h={15}>
              <path d="M7 0 14 1.500V8q0 5-7 7-7-2-7-7V1.500z" fill="#fb9a1c" />
              <path d="M9 2q1 3-1.500 5Q5 9 4.500 13 1 10 3 7q2-2.500 6-5zM11 6q1 4-2.500 7l-2 .5Q7 10 11 6z" fill="#fff" />
            </S>
          </TrayItem>
          <TrayItem $w={21}>
            <S w={14} h={17}>
              <path d="M2.500 6V1h7v5M9.500 16H1V6h10v5M4.500 3v1.200M7.500 3v1.200M7.500 13l2 2.500 3.500-4" stroke="#fff" strokeWidth="1.100" />
            </S>
          </TrayItem>
          <TrayItem $w={23}>
            <S w={17} h={15}>
              <path d="M6 2.500h10v8H3.500V7M6 14.500h7M9.500 11v3M.5 1.500h4v4h-4zM2.500 5.500V11" stroke="#fff" strokeWidth="1.100" />
            </S>
          </TrayItem>
          <TrayItem $w={25}>
            <S w={18} h={14}>
              <path d="M.5 5H3l3.500-3.500v11L3 9.500H.5zM9 5q1.500 2 0 4.500M11.500 3q3 4 0 8M14 1.500q4 5.500 0 11" stroke="#fff" strokeWidth="1.100" />
            </S>
          </TrayItem>
          <TrayItem $w={28}>
            <S w={14}>
              <path d="M7 0v14M1.500 3.500h11v5h-11z" stroke="#111" strokeWidth="3.200" />
              <path d="M7 0v14M1.500 3.500h11v5h-11z" stroke="#fff" strokeWidth="1.400" />
            </S>
          </TrayItem>
          <TrayItem $w={36}><ImeBadge>du</ImeBadge></TrayItem>
          <Clock>9:07</Clock>
          <DesktopEdge />
        </Tray>
      </Taskbar>
    </Desktop>
  );
}
